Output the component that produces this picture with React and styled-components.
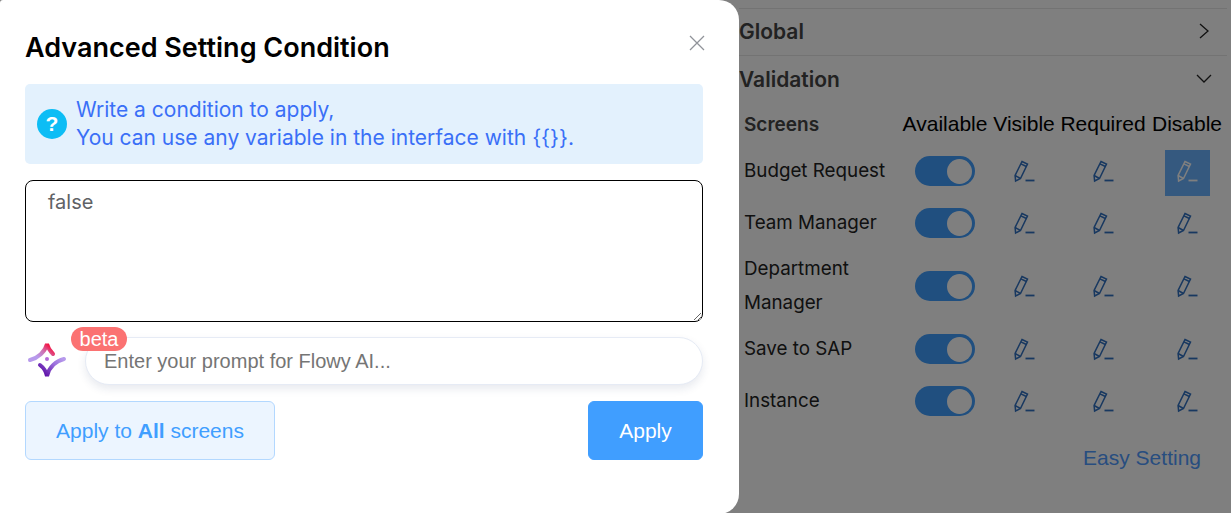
import React from 'react';
import styled, { createGlobalStyle } from 'styled-components';

const GlobalStyle = createGlobalStyle`
    html, body {
        margin: 0;
        height: 100%;
        overflow: hidden;
        background: #fff;
    }
    * {
        box-sizing: border-box;
    }
`;

const headingFont = `"Inter", "Noto Sans", sans-serif`;
const plainFont = `"Liberation Sans", Arial, sans-serif`;

//Page behind the dialog
const Page = styled.div`
    position: relative;
    width: 1231px;
    height: 513px;
    overflow: hidden;
`;
const SidePanel = styled.div`
    margin-left: 739px;
    padding: 8px 4px 0 0;
    height: 100%;
`;
const Section = styled.div`
    display: flex;
    justify-content: space-between;
    align-items: center;
    height: 47px;
    padding: 0 15px 0 0;
    border-top: 1px solid #e6e6e6;
    font: 600 21px ${headingFont};
    color: #444;
    &:first-child {
        padding-bottom: 2px;
    }
`;
const ScreenGrid = styled.div`
    display: grid;
    grid-template-columns: 161px 80px 78px 80px 88px;
    margin: 5px -4px 0 0;
    padding-left: 5px;
    align-items: center;
`;
const NameHead = styled.div`
    height: 38px;
    padding-bottom: 4px;
    display: flex;
    align-items: center;
    font: 600 19px ${headingFont};
    color: #444;
`;
const ColHead = styled(NameHead)`
    justify-content: center;
    font: 400 21px ${plainFont};
    color: #000;
    white-space: nowrap;
`;
const ScreenName = styled.div`
    padding: 3px 8px 3px 0;
    font: 400 18.8px/34px ${headingFont};
    color: #222;
`;
const Cell = styled.div`
    display: flex;
    justify-content: center;
    align-items: center;
    padding: ${(p) => (p.$active ? '5px 0 1px' : '3px 0')};
`;
const Toggle = styled.div`
    display: flex;
    justify-content: flex-end;
    align-items: center;
    width: 60px;
    height: 30px;
    padding-right: 3px;
    border-radius: 15px;
    background: #409eff;
    &::after {
        content: '';
        width: 25px;
        height: 25px;
        border-radius: 50%;
        background: #fff;
    }
`;
const EditButton = styled.div`
    display: flex;
    justify-content: center;
    align-items: center;
    width: 45px;
    height: 46px;
    padding-bottom: ${(p) => (p.$active ? '4px' : '0')};
    color: ${(p) => (p.$active ? '#fff' : '#3070c0')};
    background: ${(p) => (p.$active ? '#6ab2ff' : 'transparent')};
`;
const EasySetting = styled.div`
    margin-top: 19px;
    padding-right: 26px;
    text-align: right;
    font: 400 21px/24px ${plainFont};
    color: #509bff;
`;

//Dim layer and dialog
const Overlay = styled.div`
    position: absolute;
    inset: 0;
    background: rgba(0, 0, 0, 0.5);
`;
const Dialog = styled.div`
    position: absolute;
    top: 0;
    left: 0;
    width: 739px;
    height: 514px;
    padding: 25px 36px 0 25px;
    background: #fff;
    border-radius: 3px 20px 20px 0;
`;
const Title = styled.h2`
    margin: 0 0 13px;
    font: 600 27px/46px ${headingFont};
    color: #000;
`;
const CloseButton = styled.button`
    position: absolute;
    top: 35px;
    right: 34px;
    display: flex;
    padding: 0;
    border: 0;
    background: none;
    color: #909399;
`;
const Notice = styled.div`
    display: flex;
    align-items: center;
    gap: 9px;
    height: 80px;
    padding: 0 12px;
    border-radius: 5px;
    background: #e3f1fd;
    font: 400 21px/28px ${headingFont};
    color: #3a6ff7;
`;
const HelpDot = styled.span`
    flex: none;
    display: flex;
    justify-content: center;
    align-items: center;
    width: 30px;
    height: 30px;
    border-radius: 50%;
    background: #0dbdf5;
    color: #fff;
    font: 700 21px ${plainFont};
`;
const ConditionInput = styled.textarea`
    display: block;
    width: 100%;
    height: 142px;
    margin-top: 16px;
    padding: 8px 22px;
    border: 1px solid #000;
    border-radius: 8px;
    outline: none;
    font: 400 20px/26px ${headingFont};
    color: #606266;
`;
const PromptRow = styled.div`
    display: flex;
    align-items: center;
    gap: 18px;
    margin-top: 15px;
    padding-left: 2px;
`;
const PromptWrap = styled.div`
    position: relative;
    flex: 1;
`;
const BetaBadge = styled.span`
    position: absolute;
    top: -10px;
    left: -14px;
    width: 56px;
    height: 24px;
    border-radius: 12px;
    background: #fb7272;
    color: #fff;
    text-align: center;
    font: 400 20px/25px ${plainFont};
`;
const PromptInput = styled.input`
    display: block;
    width: 100%;
    height: 48px;
    padding: 0 18px;
    border: 1px solid #e6ebf5;
    border-radius: 24px;
    outline: none;
    box-shadow: 0 4px 8px rgba(30, 50, 100, 0.1);
    font: 400 20px ${plainFont};
    &::placeholder {
        color: #757575;
    }
`;
const ActionRow = styled.div`
    display: flex;
    justify-content: space-between;
    margin-top: 16px;
`;
const ActionButton = styled.button`
    width: ${(p) => (p.$primary ? '115px' : '250px')};
    height: 59px;
    padding: 0;
    border-radius: 6px;
    border: 1px solid ${(p) => (p.$primary ? '#409eff' : '#b3d8ff')};
    background: ${(p) => (p.$primary ? '#409eff' : '#ecf5ff')};
    color: ${(p) => (p.$primary ? '#fff' : '#409eff')};
    font: 400 21px ${plainFont};
`;

function PencilIcon() {
    return (
        <svg width="24" height="24" viewBox="0 0 24 24" fill="none" stroke="currentColor" strokeWidth="1.5">
            <path d="M10 2.5 L15.5 5.2 L8.5 19.5 L3.6 22 L3.1 16.5 Z" />
            <path d="M8.9 4.8 L14.4 7.5" />
            <path d="M3.1 16.5 L8.5 19.5" />
            <path d="M13.5 21.5 H22.5" strokeWidth="1.8" />
        </svg>
    );
}

function FlowyLogo() {
    return (
        <svg width="40" height="40" viewBox="0 0 40 40" fill="none" strokeLinecap="round" strokeWidth="4">
            <defs>
                <linearGradient id="flowyTop" x1="20" y1="2" x2="4" y2="20" gradientUnits="userSpaceOnUse">
                    <stop offset="0" stopColor="#f5103f" />
                    <stop offset="0.35" stopColor="#d070b0" />
                    <stop offset="0.7" stopColor="#b79aec" />
                    <stop offset="1" stopColor="#b79aec" />
                </linearGradient>
                <linearGradient id="flowyBottom" x1="20" y1="36" x2="36" y2="18" gradientUnits="userSpaceOnUse">
                    <stop offset="0" stopColor="#5f12a8" />
                    <stop offset="0.6" stopColor="#9b6fdc" />
                    <stop offset="1" stopColor="#b79aec" />
                </linearGradient>
            </defs>
            <path d="M3 19 C11 17 18 11 20 3 C21 7 23 10 26 13" stroke="url(#flowyTop)" />
            <path d="M37 18 C29 20 22 26 20 35 C19 30 17 27 13 24" stroke="url(#flowyBottom)" />
            <circle cx="20" cy="18" r="2" fill="#b56ad8" stroke="none" />
        </svg>
    );
}

const screens = ['Budget Request', 'Team Manager', 'Department Manager', 'Save to SAP', 'Instance'];

export default function App() {
    return (
        <Page>
            <GlobalStyle />
            <SidePanel>
                <Section>
                    Global
                    <svg width="12" height="18" viewBox="0 0 12 18" fill="none" stroke="#222" strokeWidth="1.3" style={{ marginRight: 2 }}>
                        <path d="M2 2 L10 9 L2 16" />
                    </svg>
                </Section>
                <Section>
                    Validation
                    <svg width="18" height="12" viewBox="0 0 18 12" fill="none" stroke="#222" strokeWidth="1.3" style={{ marginRight: -1 }}>
                        <path d="M2 2 L9 9 L16 2" />
                    </svg>
                </Section>
                <ScreenGrid>
                    <NameHead>Screens</NameHead>
                    <ColHead>Available</ColHead>
                    <ColHead>Visible</ColHead>
                    <ColHead>Required</ColHead>
                    <ColHead>Disable</ColHead>
                    {screens.map((name, i) => (
                        <React.Fragment key={name}>
                            <ScreenName>{name}</ScreenName>
                            <Cell><Toggle /></Cell>
                            <Cell><EditButton><PencilIcon /></EditButton></Cell>
                            <Cell><EditButton><PencilIcon /></EditButton></Cell>
                            <Cell $active={i === 0}><EditButton $active={i === 0}><PencilIcon /></EditButton></Cell>
                        </React.Fragment>
                    ))}
                </ScreenGrid>
                <EasySetting>Easy Setting</EasySetting>
            </SidePanel>
            <Overlay />
            <Dialog>
                <Title>Advanced Setting Condition</Title>
                <CloseButton aria-label="Close">
                    <svg width="16" height="16" viewBox="0 0 16 16" fill="none" stroke="currentColor" strokeWidth="1.3">
                        <path d="M1 1 L15 15 M15 1 L1 15" />
                    </svg>
                </CloseButton>
                <Notice>
                    <HelpDot>?</HelpDot>
                    <div>
                        Write a condition to apply,<br />
                        You can use any variable in the interface with {'{{}}'}.
                    </div>
                </Notice>
                <ConditionInput defaultValue="false" />
                <PromptRow>
                    <FlowyLogo />
                    <PromptWrap>
                        <BetaBadge>beta</BetaBadge>
                        <PromptInput placeholder="Enter your prompt for Flowy AI..." />
                    </PromptWrap>
                </PromptRow>
                <ActionRow>
                    <ActionButton>Apply to <b>All</b> screens</ActionButton>
                    <ActionButton $primary>Apply</ActionButton>
                </ActionRow>
            </Dialog>
        </Page>
    );
}
